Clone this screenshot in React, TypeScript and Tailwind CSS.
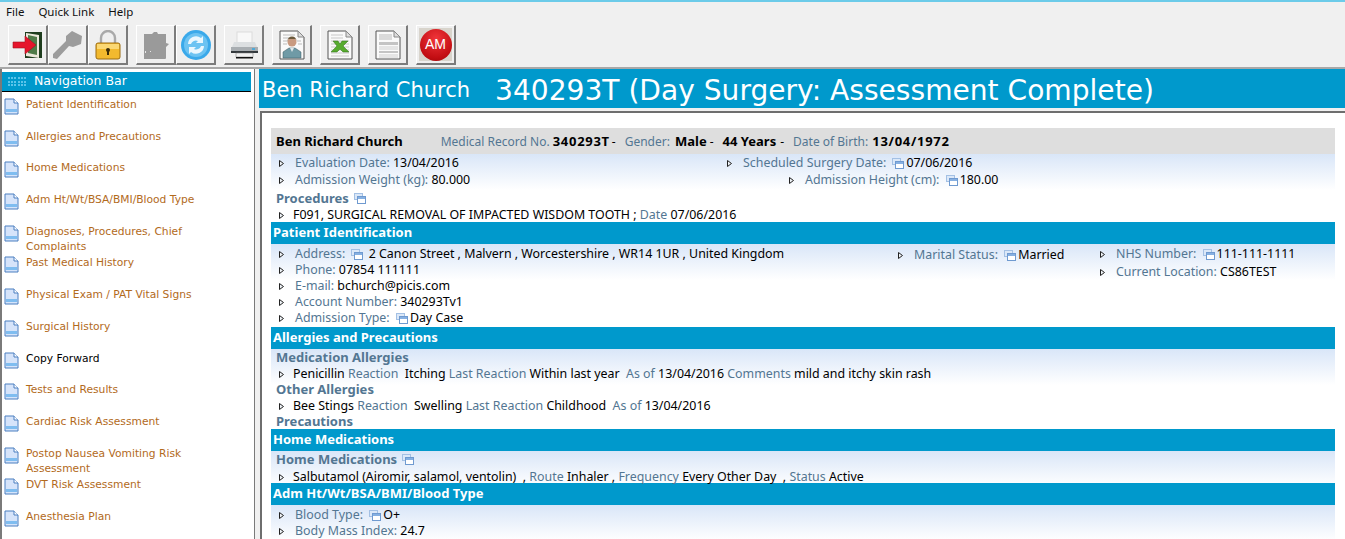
import type { ReactNode } from "react";

const NAV_ITEMS = [
  "Patient Identification",
  "Allergies and Precautions",
  "Home Medications",
  "Adm Ht/Wt/BSA/BMI/Blood Type",
  "Diagnoses, Procedures, Chief Complaints",
  "Past Medical History",
  "Physical Exam / PAT Vital Signs",
  "Surgical History",
  "Copy Forward",
  "Tests and Results",
  "Cardiac Risk Assessment",
  "Postop Nausea Vomiting Risk Assessment",
  "DVT Risk Assessment",
  "Anesthesia Plan",
];

function DocIcon() {
  return (
    <svg width="15" height="17" viewBox="0 0 15 17" className="shrink-0">
      <path d="M1 1h9l4 4v11H1z" fill="#d6e4fa" stroke="#4a7fc0" />
      <path d="M10 1v4h4" fill="#fff" stroke="#4a7fc0" />
      <rect x="2" y="11" width="11" height="3" fill="#7fbdf0" />
    </svg>
  );
}

function Arrow() {
  return (
    <svg width="5" height="7" viewBox="0 0 5 7" className="shrink-0">
      <path d="M0.5 0.5 L4.5 3.5 L0.5 6.5 Z" fill="#eef2f6" stroke="#222" />
    </svg>
  );
}

function CopyIcon({ className = "ml-[3px] mr-[2px]" }: { className?: string }) {
  return (
    <svg width="12" height="11" viewBox="0 0 12 11" className={`shrink-0 ${className}`}>
      <rect x="0.5" y="0.5" width="8" height="6" fill="#dbe8f8" stroke="#a3c0e4" />
      <rect x="3.5" y="3.5" width="8" height="7" fill="#fff" stroke="#6f9ad0" />
      <rect x="4" y="4" width="7" height="2" fill="#86b0e2" />
    </svg>
  );
}

function ToolButton({ children, className = "" }: { children: ReactNode; className?: string }) {
  return (
    <div
      className={`flex h-[40px] w-[40px] items-center justify-center border border-t-white border-l-white border-r-[2px] border-b-[2px] border-r-[#7c7c7c] border-b-[#7c7c7c] bg-[#efefef] ${className}`}
    >
      {children}
    </div>
  );
}

function Toolbar() {
  return (
    <div className="flex h-[47px] items-start border-b-2 border-b-[#a8a8a8] pl-2 pt-[3px]">
      <ToolButton>
        <svg width="32" height="30" viewBox="0 0 32 30">
          <path d="M13 2h17v26H13z" fill="#1f3d1e" />
          <path d="M14 3l13 2v23l-13-2z" fill="#ece9dc" />
          <path d="M16 5l9 2v18l-9-2z" fill="#4f7a48" />
          <path d="M1 12h12V6l11 9-11 9v-6H1z" fill="#e6142b" stroke="#a01020" strokeWidth="0.6" />
        </svg>
      </ToolButton>
      <ToolButton>
        <svg width="32" height="30" viewBox="0 0 32 30">
          <path d="M20 1l10 5-1 8-8 3-4-1-12 13-4-1v-4l13-13 0-5z" fill="#9c9c9c" />
        </svg>
      </ToolButton>
      <ToolButton>
        <svg width="28" height="30" viewBox="0 0 28 30">
          <path d="M7 14V8a7 7 0 0 1 14 0v6" fill="none" stroke="#a9a9a9" strokeWidth="2.4" />
          <rect x="2" y="13" width="24" height="16" rx="2" fill="#f2b92e" stroke="#9c6c10" />
          <rect x="3" y="14" width="22" height="5" fill="#fbd873" />
          <circle cx="14" cy="20" r="2" fill="#3a2c08" />
          <rect x="13" y="20" width="2" height="5" fill="#3a2c08" />
        </svg>
      </ToolButton>
      <ToolButton className="ml-2">
        <svg width="30" height="30" viewBox="0 0 30 30">
          <path d="M3 4h8l2-2h3l1 2h8v9l3 1-3 3v11a1 1 0 0 1-1 1H3z" fill="#9a9a9a" />
          <rect x="4" y="21" width="1" height="2" fill="#e8e8e8" />
          <rect x="9" y="21" width="1" height="1" fill="#e8e8e8" />
        </svg>
      </ToolButton>
      <ToolButton>
        <svg width="32" height="32" viewBox="0 0 32 32">
          <circle cx="16" cy="16" r="15" fill="#3aa9ea" />
          <circle cx="16" cy="16" r="12" fill="#6cc3f2" />
          <path d="M8 15a8 8 0 0 1 13-6l2-2v7h-7l2-2a5 5 0 0 0-7 3z" fill="#eaf7fe" />
          <path d="M24 17a8 8 0 0 1-13 6l-2 2v-7h7l-2 2a5 5 0 0 0 7-3z" fill="#eaf7fe" />
        </svg>
      </ToolButton>
      <ToolButton className="ml-2">
        <svg width="28" height="30" viewBox="0 0 28 30">
          <rect x="7" y="2" width="15" height="11" fill="#f8f8f8" stroke="#dcdcdc" />
          <path d="M4 12h21l2 5H2z" fill="#dcdfe1" />
          <rect x="1" y="17" width="27" height="5" fill="#a9aeb2" />
          <rect x="22" y="18" width="3" height="2" fill="#4fa9d8" />
          <rect x="1" y="21" width="27" height="2" fill="#33393d" />
          <rect x="6" y="23" width="17" height="4" fill="#f2f2f2" stroke="#777" strokeWidth="0.5" />
          <rect x="6" y="27" width="17" height="1.5" fill="#111" />
        </svg>
      </ToolButton>
      <ToolButton className="ml-2">
        <svg width="28" height="30" viewBox="0 0 28 30">
          <path d="M2 1h18l6 6v22H2z" fill="#fafafa" stroke="#555" />
          <path d="M20 1v6h6z" fill="#ddd" stroke="#888" />
          <path d="M5 5h12M5 8h12M5 11h5M19 11h4M5 14h4M20 14h4" stroke="#bbb" />
          <circle cx="14" cy="12" r="4.5" fill="#c99a80" />
          <path d="M9.5 11a4.5 4.5 0 0 1 9 0l-1-2h-7z" fill="#6b5a3c" />
          <path d="M5 28v-6l6-4h6l6 4v6z" fill="#6f9aa6" stroke="#3b5860" strokeWidth="0.5" />
          <path d="M12 18l2 4 2-4z" fill="#dfe8ea" />
        </svg>
      </ToolButton>
      <ToolButton className="ml-2">
        <svg width="28" height="30" viewBox="0 0 28 30">
          <path d="M2 1h18l6 6v22H2z" fill="#fafafa" stroke="#555" />
          <path d="M20 1v6h6z" fill="#ddd" stroke="#888" />
          <path d="M5 5h12M5 8h12M5 11h18M5 14h18M5 17h18M5 20h18M5 23h18M5 26h18" stroke="#c8c8c8" />
          <path d="M7 11h5l2 3 2-3h6l-5 5 6 6h-6l-3-3-3 3H5l6-6z" fill="#57ab2f" stroke="#2c6d16" strokeWidth="0.5" />
        </svg>
      </ToolButton>
      <ToolButton className="ml-2">
        <svg width="28" height="30" viewBox="0 0 28 30">
          <path d="M2 1h18l6 6v22H2z" fill="#fafafa" stroke="#555" />
          <path d="M20 1v6h6z" fill="#ddd" stroke="#888" />
          <path d="M5 5h13M5 7h13M5 9h13" stroke="#bbb" />
          <rect x="5" y="12" width="19" height="3" fill="#c4c4c4" />
          <path d="M5 17h19M5 19h19" stroke="#d0d0d0" />
          <rect x="5" y="21" width="19" height="2" fill="#c4c4c4" />
          <path d="M5 25h19M5 27h19" stroke="#d0d0d0" />
        </svg>
      </ToolButton>
      <ToolButton className="ml-2">
        <div className="flex h-[33px] w-[33px] items-center justify-center bg-[#d8d4cc]">
          <div className="flex h-[32px] w-[32px] items-center justify-center rounded-full bg-[radial-gradient(circle_at_50%_30%,#f0353a,#c20d12_70%,#9a0508)] font-['Liberation_Sans',sans-serif] text-[14px] text-white">
            AM
          </div>
        </div>
      </ToolButton>
    </div>
  );
}

function Sidebar() {
  return (
    <aside className="h-full w-[255px] shrink-0 border-x-[1px] border-x-[#7a7a7a] border-l-2 bg-white pt-[3px] font-['DejaVu_Sans',sans-serif]">
      <div className="mx-0 flex h-[20px] w-[249px] items-center border-b border-b-black bg-[#0099cc] pl-[6px]">
        <div className="grid h-[9px] w-[19px] grid-cols-[repeat(6,2px)] gap-x-[1.2px] gap-y-[1.5px]">
          {Array.from({ length: 18 }).map((_, i) => (
            <span key={i} className="h-[2px] w-[2px] bg-[#5cc4ea]" />
          ))}
        </div>
        <span className="ml-[7px] text-[12.5px] text-white">Navigation Bar</span>
      </div>
      <ul className="pt-[6px]">
        {NAV_ITEMS.map((item) => (
          <li key={item} className="flex h-[31.7px] items-start">
            <span className="ml-[2px]">
              <DocIcon />
            </span>
            <span
              className={`-mt-[1px] ml-[7px] w-[190px] text-[10.7px] leading-[15px] ${item === "Copy Forward" ? "text-black" : "text-[#b26a1c]"}`}
            >
              {item}
            </span>
          </li>
        ))}
      </ul>
    </aside>
  );
}

function Label({ children }: { children: ReactNode }) {
  return <span className="text-[#537692]">{children}</span>;
}

function Row({ children, className = "" }: { children: ReactNode; className?: string }) {
  return (
    <div className={`flex h-[16px] items-center whitespace-pre pl-[8px] pt-[2px] leading-[16px] ${className}`}>
      <Arrow />
      <span className="ml-[11px] flex items-center whitespace-pre">{children}</span>
    </div>
  );
}

// rows without a label column: text starts closer to the arrow
function ListRow({ children, className = "" }: { children: ReactNode; className?: string }) {
  return (
    <div className={`flex h-[16px] items-center whitespace-pre pl-[8px] pt-[2px] ${className}`}>
      <Arrow />
      <span className="ml-[9px]">{children}</span>
    </div>
  );
}

function SectionBar({ children }: { children: ReactNode }) {
  return (
    <div className="flex h-[22px] items-center bg-[#0099cc] pl-[2px] text-[13px] font-bold text-white">
      {children}
    </div>
  );
}

function SubHead({ children }: { children: ReactNode }) {
  return (
    <div className="flex h-[16px] items-center pl-[5px] text-[13px] font-bold leading-[16px] text-[#537692]">
      {children}
    </div>
  );
}

const PANEL_GRADIENT = "bg-[linear-gradient(#d9e6f8,#ffffff_36px)]";

function MainContent() {
  return (
    <section className="ml-[4px] min-w-0 flex-1">
      <div className="flex h-[39px] items-center gap-[25px] whitespace-pre bg-[#0099cc] pl-[3px] pt-[5px] font-['DejaVu_Sans',sans-serif] text-white">
        <span className="text-[21px]">Ben Richard Church</span>
        <span className="text-[28.1px]">340293T (Day Surgery: Assessment Complete)</span>
      </div>
      <div className="mt-[3px] ml-[1px] h-[440px] overflow-hidden border-t-2 border-l-2 border-[#6e6e6e] bg-white pt-[15px] pl-[9px] pr-[10px] font-['Noto_Sans',sans-serif] text-[12.4px] text-black">
        <div className="flex h-[26px] items-center whitespace-pre bg-[#dedede] pl-[5px] pt-[2px] text-[12px]">
          <b className="text-[13px]">Ben Richard Church</b>
          <span className="ml-[38px]">
            <Label>Medical Record No. </Label>
          </span>
          <b className="text-[13px] tracking-[0.7px]">340293T</b>
          <span className="ml-[2px]">-</span>
          <span className="ml-[9px]">
            <Label>Gender: </Label>
          </span>
          <b className="ml-[2px] text-[13px]">Male</b>
          <span className="ml-[3px]">-</span>
          <b className="ml-[9px] text-[13px]">44 Years</b>
          <span className="ml-[4px]">-</span>
          <span className="ml-[9px]">
            <Label>Date of Birth: </Label>
          </span>
          <b className="ml-[1px] text-[13px] tracking-[0.7px]">13/04/1972</b>
        </div>

        <div className={`${PANEL_GRADIENT} h-[36px]`}>
          <div className="flex h-[17px]">
            <Row className="w-[448px]">
              <Label>Evaluation Date: </Label>13/04/2016
            </Row>
            <Row>
              <Label>Scheduled Surgery Date: </Label>
              <CopyIcon />
              07/06/2016
            </Row>
          </div>
          <div className="flex h-[17px]">
            <Row className="w-[510px]">
              <Label>Admission Weight (kg): </Label>80.000
            </Row>
            <Row>
              <Label>Admission Height (cm): </Label>
              <CopyIcon />
              180.00
            </Row>
          </div>
        </div>
        <SubHead>
          Procedures <CopyIcon className="ml-[5px]" />
        </SubHead>
        <ListRow>
          F091, SURGICAL REMOVAL OF IMPACTED WISDOM TOOTH ; <Label>Date</Label> 07/06/2016
        </ListRow>

        <SectionBar>Patient Identification</SectionBar>
        <div className={`${PANEL_GRADIENT} flex h-[83px] pt-[1px]`}>
          <div className="flex w-[619px] flex-col">
            <Row>
              <Label>Address: </Label>
              <CopyIcon />
              {" 2 Canon Street , Malvern , Worcestershire , WR14 1UR , United Kingdom"}
            </Row>
            <Row>
              <Label>Phone: </Label>07854 111111
            </Row>
            <Row>
              <Label>E-mail: </Label>bchurch@picis.com
            </Row>
            <Row>
              <Label>Account Number: </Label>340293Tv1
            </Row>
            <Row>
              <Label>Admission Type: </Label>
              <CopyIcon />
              Day Case
            </Row>
          </div>
          <div className="w-[202px] pt-[1px]">
            <Row>
              <Label>Marital Status: </Label>
              <CopyIcon />
              Married
            </Row>
          </div>
          <div className="flex flex-col gap-[2px]">
            <Row>
              <Label>NHS Number: </Label>
              <CopyIcon />
              111-111-1111
            </Row>
            <Row>
              <Label>Current Location: </Label>CS86TEST
            </Row>
          </div>
        </div>

        <SectionBar>Allergies and Precautions</SectionBar>
        <div className={`${PANEL_GRADIENT} h-[80px]`}>
          <SubHead>Medication Allergies</SubHead>
          <ListRow>
            Penicillin <Label>Reaction</Label>  Itching <Label>Last Reaction</Label> Within last year  <Label>As of</Label> 13/04/2016 <Label>Comments</Label> mild and itchy skin rash
          </ListRow>
          <SubHead>Other Allergies</SubHead>
          <ListRow>
            Bee Stings <Label>Reaction</Label>  Swelling <Label>Last Reaction</Label> Childhood  <Label>As of</Label> 13/04/2016
          </ListRow>
          <SubHead>Precautions</SubHead>
        </div>

        <SectionBar>Home Medications</SectionBar>
        <div className={`${PANEL_GRADIENT} h-[32px]`}>
          <SubHead>
            Home Medications <CopyIcon className="ml-[5px]" />
          </SubHead>
          <ListRow className="mt-[1px]">
            Salbutamol (Airomir, salamol, ventolin)  , <Label>Route</Label> Inhaler , <Label>Frequency</Label> Every Other Day  , <Label>Status</Label> Active
          </ListRow>
        </div>

        <SectionBar>Adm Ht/Wt/BSA/BMI/Blood Type</SectionBar>
        <div className={`${PANEL_GRADIENT} h-[40px] pt-[1px]`}>
          <Row>
            <Label>Blood Type: </Label>
            <CopyIcon />
            O+
          </Row>
          <Row>
            <Label>Body Mass Index: </Label>24.7
          </Row>
        </div>
      </div>
    </section>
  );
}

export default function App() {
  return (
    <div className="flex h-[539px] w-[1345px] flex-col overflow-hidden bg-[#f0f0f0]">
      <div className="h-[2px] bg-[#6ccbe9]" />
      <nav className="flex h-[20px] items-center pl-[6px] font-['Noto_Sans',sans-serif] text-[11.5px] text-[#111]">
        <span>File</span>
        <span className="ml-[14px]">Quick Link</span>
        <span className="ml-[14px]">Help</span>
      </nav>
      <Toolbar />
      <div className="flex min-h-0 flex-1">
        <Sidebar />
        <MainContent />
      </div>
    </div>
  );
}
